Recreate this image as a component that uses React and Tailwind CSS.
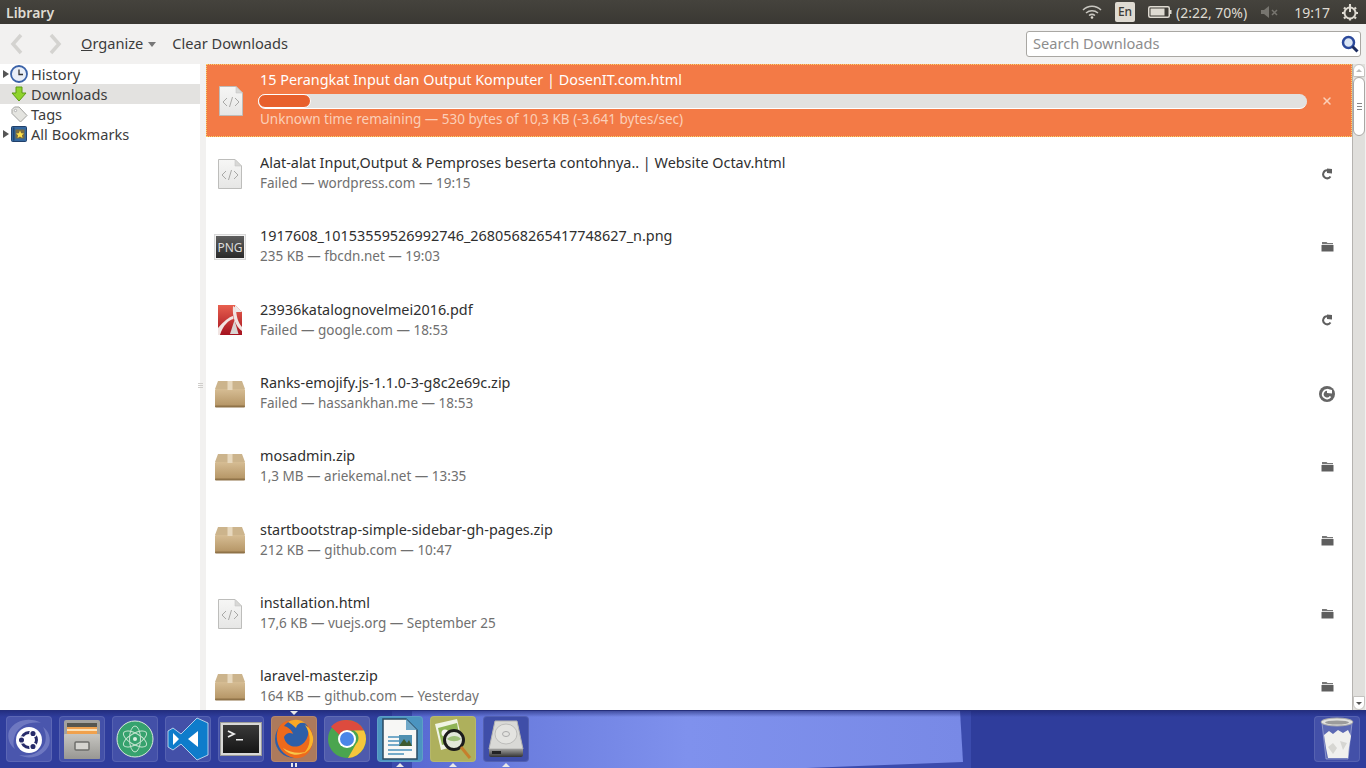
import { X } from "lucide-react";

const rows = [
  { name: "Alat-alat Input,Output & Pemproses beserta contohnya.. | Website Octav.html", info: "Failed — wordpress.com — 19:15", icon: "html", action: "retry" },
  { name: "1917608_10153559526992746_2680568265417748627_n.png", info: "235 KB — fbcdn.net — 19:03", icon: "png", action: "folder" },
  { name: "23936katalognovelmei2016.pdf", info: "Failed — google.com — 18:53", icon: "pdf", action: "retry" },
  { name: "Ranks-emojify.js-1.1.0-3-g8c2e69c.zip", info: "Failed — hassankhan.me — 18:53", icon: "zip", action: "retryHover" },
  { name: "mosadmin.zip", info: "1,3 MB — ariekemal.net — 13:35", icon: "zip", action: "folder" },
  { name: "startbootstrap-simple-sidebar-gh-pages.zip", info: "212 KB — github.com — 10:47", icon: "zip", action: "folder" },
  { name: "installation.html", info: "17,6 KB — vuejs.org — September 25", icon: "html", action: "folder" },
  { name: "laravel-master.zip", info: "164 KB — github.com — Yesterday", icon: "zip", action: "folder" },
];

function HtmlIcon() {
  return (
    <svg width="26" height="32" viewBox="0 0 26 32">
      <defs>
        <linearGradient id="htmlbg" x1="0" y1="0" x2="0" y2="1">
          <stop offset="0" stopColor="#f6f6f5" />
          <stop offset="1" stopColor="#e6e6e5" />
        </linearGradient>
      </defs>
      <path d="M1.5 1.5H18L24.5 8V30.5H1.5Z" fill="url(#htmlbg)" stroke="#bdbdbb" />
      <path d="M18 1.5V8H24.5Z" fill="#d8d8d6" stroke="#c8c8c6" strokeWidth="0.6" />
      <path d="M9 13L5 17L9 21M17 13L21 17L17 21M14.5 12L11.5 22" fill="none" stroke="#a9a9a7" strokeWidth="1" />
    </svg>
  );
}

function PngIcon() {
  return (
    <svg width="32" height="26" viewBox="0 0 32 26">
      <rect x="0.5" y="0.5" width="31" height="25" fill="#f2f2f2" stroke="#d8d8d8" />
      <defs>
        <linearGradient id="pngbg" x1="0" y1="0" x2="0" y2="1">
          <stop offset="0" stopColor="#5e5e5e" />
          <stop offset="1" stopColor="#2a2a2a" />
        </linearGradient>
      </defs>
      <rect x="2" y="2" width="28" height="22" fill="url(#pngbg)" />
      <text x="16" y="17.5" textAnchor="middle" fontSize="12" fill="#dcdcdc" fontFamily="'Noto Sans', sans-serif">PNG</text>
    </svg>
  );
}

function PdfIcon() {
  return (
    <svg width="26" height="32" viewBox="0 0 26 32">
      <defs>
        <linearGradient id="pdfbg" x1="0" y1="0" x2="0" y2="1">
          <stop offset="0" stopColor="#e8604f" />
          <stop offset="1" stopColor="#a5121f" />
        </linearGradient>
      </defs>
      <path d="M1 1H18L25 8V31H1Z" fill="url(#pdfbg)" />
      <path d="M18 1L25 8H18Z" fill="#ececec" />
      <path d="M16 2C15 12 18 22 25 27V23C21 19 19 11 19 4ZM1 24C7 17 12 13 16 12L16.5 15C12 16 6 21 3 31H1Z" fill="#f1e4e2" />
      <path d="M17.5 16L21.5 30H13Z" fill="#d9d4d2" />
    </svg>
  );
}

function ZipIcon() {
  return (
    <svg width="32" height="28" viewBox="0 0 32 28">
      <defs>
        <linearGradient id="boxfront" x1="0" y1="0" x2="0" y2="1">
          <stop offset="0" stopColor="#d6bd94" />
          <stop offset="1" stopColor="#b39363" />
        </linearGradient>
      </defs>
      <path d="M4 1H28L31 9H1Z" fill="#ccb48c" />
      <rect x="1" y="9" width="30" height="18" rx="1" fill="url(#boxfront)" />
      <rect x="1" y="25.5" width="30" height="2" rx="1" fill="#8f7349" />
      <rect x="13.5" y="1" width="5" height="9" fill="#e7d8bd" />
    </svg>
  );
}

function RetryIcon() {
  return (
    <svg width="12" height="12" viewBox="0 0 12 12">
      <path d="M9.5 8.5A4 4 0 1 1 7.2 2.4" fill="none" stroke="#5f5f5f" strokeWidth="2" />
      <path d="M6 0.5L11 1V5.5L6 5Z" fill="#5f5f5f" />
    </svg>
  );
}

function RetryHoverIcon() {
  return (
    <svg width="18" height="18" viewBox="0 0 18 18">
      <circle cx="9" cy="9" r="8" fill="#666" />
      <path d="M12.5 11.5A4.2 4.2 0 1 1 10.5 5.2" fill="none" stroke="#fff" strokeWidth="1.8" />
      <path d="M9 3.8L14 5V8.5L9 8Z" fill="#fff" />
    </svg>
  );
}

function FolderIcon() {
  return (
    <svg width="13" height="11" viewBox="0 0 13 11">
      <path d="M1 1H5.5L6.5 2H12V3.2H1Z" fill="#777" />
      <path d="M0.5 4H12.5V10.5H0.5Z" fill="#5e5e5e" />
    </svg>
  );
}

function FileIcon({ type }) {
  if (type === "png") return <PngIcon />;
  if (type === "pdf") return <PdfIcon />;
  if (type === "zip") return <ZipIcon />;
  return <HtmlIcon />;
}

function ActionIcon({ type }) {
  if (type === "retry") return <RetryIcon />;
  if (type === "retryHover") return <RetryHoverIcon />;
  return <FolderIcon />;
}

function ClockIcon() {
  return (
    <svg width="18" height="18" viewBox="0 0 18 18">
      <circle cx="9" cy="9" r="8" fill="#e9eef7" stroke="#3a62a8" strokeWidth="1.8" />
      <path d="M9 4.5V9.5H13" fill="none" stroke="#333" strokeWidth="1.3" />
    </svg>
  );
}

function DownIcon() {
  return (
    <svg width="16" height="16" viewBox="0 0 16 16">
      <path d="M5 1H11V7H15L8 15L1 7H5Z" fill="#8fd32c" stroke="#5c9a12" />
    </svg>
  );
}

function TagIcon() {
  return (
    <svg width="17" height="17" viewBox="0 0 17 17">
      <path d="M1 3.5L3.5 1H8L16 9.5L9.5 16L1 7.5Z" fill="#e4e4e0" stroke="#a3a3a0" />
      <circle cx="4.5" cy="4.5" r="1.2" fill="#fff" stroke="#999" strokeWidth="0.7" />
    </svg>
  );
}

function BookIcon() {
  return (
    <svg width="16" height="16" viewBox="0 0 16 16">
      <rect x="0.5" y="0.5" width="15" height="15" rx="1" fill="#35689f" stroke="#21406a" />
      <rect x="2" y="1.5" width="1.5" height="13" fill="#20446f" />
      <rect x="4.5" y="3.5" width="9" height="9" fill="#7b6d3e" />
      <path d="M9 4.5L10.2 7.2L13 7.5L10.9 9.3L11.5 12L9 10.6L6.5 12L7.1 9.3L5 7.5L7.8 7.2Z" fill="#ffe14b" />
    </svg>
  );
}

function SidebarItem({ label, icon, arrow, selected }) {
  return (
    <div className={`flex h-5 items-center ${selected ? "bg-[#e3e2e0]" : ""}`}>
      <span className="flex w-[9px] justify-end">
        {arrow && <span className="h-0 w-0 border-y-[4px] border-l-[6px] border-y-transparent border-l-[#555]" />}
      </span>
      <span className="flex w-5 justify-center">{icon}</span>
      <span className="ml-[2px] pt-[2px] text-[#3c3c3c]">{label}</span>
    </div>
  );
}

function Tile({ bg, children, mark, over }) {
  return (
    <div className={`relative flex h-[46px] w-[46px] shrink-0 items-center justify-center rounded-[4px] border border-white/10 ${bg}`}>
      {children}
      {over && <span className="absolute top-[-6px] h-0 w-0 border-x-[4px] border-t-[4px] border-x-transparent border-t-[#e8e8e8]" />}
      {mark === "double" && (
        <span className="absolute bottom-[-6px] flex gap-[2px]">
          <span className="h-[4px] w-[2px] bg-[#e8e8e8]" />
          <span className="h-[4px] w-[2px] bg-[#e8e8e8]" />
        </span>
      )}
      {mark === "bottom" && <span className="absolute bottom-[-6px] h-0 w-0 border-x-[4px] border-b-[4px] border-x-transparent border-b-[#e8e8e8]" />}
    </div>
  );
}

function UbuntuLogo() {
  return (
    <svg width="44" height="44" viewBox="0 0 44 44">
      <path d="M2 14C8 2 24 0 34 6C24 4 12 8 8 18C6 24 6 28 8 32C2 28 0 20 2 14Z" fill="#8790cf" fillOpacity="0.6" />
      <path d="M42 28C38 38 24 44 12 38C24 40 34 36 38 26C40 20 38 14 36 10C42 14 44 22 42 28Z" fill="#8790cf" fillOpacity="0.6" />
      <circle cx="22" cy="23" r="13" fill="#fff" />
      <circle cx="22" cy="23" r="7.5" fill="none" stroke="#272c6a" strokeWidth="3" />
      <circle cx="14.5" cy="23" r="3.2" fill="#272c6a" stroke="#fff" strokeWidth="1.3" />
      <circle cx="26" cy="16.5" r="3.2" fill="#272c6a" stroke="#fff" strokeWidth="1.3" />
      <circle cx="26" cy="29.5" r="3.2" fill="#272c6a" stroke="#fff" strokeWidth="1.3" />
    </svg>
  );
}

function FilesLogo() {
  return (
    <svg width="38" height="41" viewBox="0 0 38 41">
      <defs>
        <linearGradient id="drawer" x1="0" y1="0" x2="0" y2="1">
          <stop offset="0" stopColor="#c6c5c1" />
          <stop offset="1" stopColor="#989793" />
        </linearGradient>
      </defs>
      <rect x="1" y="1" width="36" height="39" rx="2" fill="#a3a29f" />
      <rect x="4" y="4" width="30" height="5" fill="#57564f" />
      <rect x="4" y="8" width="30" height="9" fill="#f0a14d" />
      <rect x="4" y="10" width="30" height="2" fill="#fae0b8" />
      <rect x="1" y="15" width="36" height="25" rx="1" fill="url(#drawer)" />
      <rect x="12" y="23" width="14" height="8" rx="1" fill="#d5d4d0" stroke="#6e6e6b" strokeWidth="1.5" />
    </svg>
  );
}

function AtomLogo() {
  return (
    <svg width="38" height="38" viewBox="0 0 38 38">
      <circle cx="19" cy="19" r="18" fill="#36a26e" stroke="#d9e9dd" strokeWidth="1" />
      <g fill="none" stroke="#c3e3cf" strokeWidth="1">
        <ellipse cx="19" cy="19" rx="13" ry="5.5" transform="rotate(30 19 19)" />
        <ellipse cx="19" cy="19" rx="13" ry="5.5" transform="rotate(-30 19 19)" />
        <ellipse cx="19" cy="19" rx="13" ry="5.5" transform="rotate(90 19 19)" />
      </g>
      <circle cx="19" cy="19" r="2" fill="#d9efe0" />
    </svg>
  );
}

function VsLogo() {
  return (
    <svg width="42" height="44" viewBox="0 0 42 44">
      <path d="M30 1L41 6V38L30 43L14 27L6 33L1 30V14L6 11L14 17Z" fill="#0e7ccb" stroke="#d7e8f5" strokeWidth="0.8" />
      <path d="M6 16L12 22L6 28ZM31 14V30L21 22Z" fill="#fff" />
    </svg>
  );
}

function TerminalLogo() {
  return (
    <svg width="42" height="34" viewBox="0 0 42 34">
      <defs>
        <linearGradient id="termbg" x1="0" y1="0" x2="0" y2="1">
          <stop offset="0" stopColor="#3a3a3a" />
          <stop offset="1" stopColor="#151515" />
        </linearGradient>
      </defs>
      <rect x="0.5" y="0.5" width="41" height="33" fill="#d8d8d6" stroke="#9d9d9a" />
      <rect x="3" y="3" width="36" height="28" fill="url(#termbg)" />
      <path d="M8 9L14 12L8 15" fill="none" stroke="#eee" strokeWidth="1.8" />
      <rect x="16" y="17" width="7" height="1.5" fill="#eee" />
    </svg>
  );
}

function FirefoxLogo() {
  return (
    <svg width="40" height="40" viewBox="0 0 40 40">
      <circle cx="20" cy="20" r="19" fill="#2e5fa8" />
      <path d="M4 10C0 22 6 36 20 39C32 41 40 30 39 18C38 12 36 8 33 5C36 13 34 22 27 26C20 30 11 26 10 18C12 14 16 13 19 15C18 11 14 8 10 7C12 4 16 2 19 1C11 1 6 5 4 10Z" fill="#ee6a1c" />
      <path d="M31 6C37 15 38 27 29 35C36 32 40 25 39 18C38 13 35 8 31 6Z" fill="#fbb52b" />
      <path d="M14 3C19 0 26 0 31 4C26 3 23 5 22 9C19 6 16 4 14 3Z" fill="#f9a825" />
      <path d="M9 29C14 36 24 38 31 33C24 35 15 33 9 29Z" fill="#f7c64a" />
    </svg>
  );
}

function ChromeLogo() {
  return (
    <svg width="40" height="40" viewBox="0 0 40 40">
      <circle cx="20" cy="20" r="19" fill="#4aa54f" />
      <path d="M20 1A19 19 0 0 1 37 11.5H20A8.5 8.5 0 0 0 12.5 16L4 7.8A19 19 0 0 1 20 1Z" fill="#dd4b3e" />
      <path d="M37 11.5A19 19 0 0 1 21 39L29 25A8.5 8.5 0 0 0 27 11.5Z" fill="#f5c63c" />
      <circle cx="20" cy="20" r="9" fill="#fff" />
      <circle cx="20" cy="20" r="7" fill="#4a86e8" />
    </svg>
  );
}

function WriterLogo() {
  return (
    <svg width="36" height="42" viewBox="0 0 36 42">
      <path d="M1 1H24L35 12V41H1Z" fill="#f7f7f5" stroke="#2a4a60" strokeWidth="1.5" />
      <path d="M24 1L35 12H24Z" fill="#6fa8c8" />
      <g fill="#74aac9">
        <rect x="6" y="18" width="24" height="2" />
        <rect x="6" y="22" width="12" height="2" />
        <rect x="6" y="26" width="12" height="2" />
        <rect x="6" y="31" width="24" height="2" />
        <rect x="6" y="35" width="16" height="2" />
      </g>
      <rect x="17" y="17" width="13" height="11" fill="#4e8fb0" />
      <path d="M17 28L22 21L25 25L27 22L30 28Z" fill="#3f5b30" />
    </svg>
  );
}

function ViewerLogo() {
  return (
    <svg width="40" height="42" viewBox="0 0 40 42">
      <path d="M2 6L24 1L30 26L8 32Z" fill="#f0f4e4" />
      <path d="M5 10L24 5L27 22L9 27Z" fill="#8fb455" />
      <circle cx="12" cy="15" r="3.5" fill="#f5f5f0" />
      <circle cx="21" cy="22" r="9.5" fill="#e2e7da" stroke="#1c1c1c" strokeWidth="3" />
      <path d="M14 21C18 17 25 17 28 21C24 24 18 24 14 21Z" fill="#9fc07a" />
      <path d="M28 29L37 40" stroke="#c67f2c" strokeWidth="3" />
    </svg>
  );
}

function DiskLogo() {
  return (
    <svg width="36" height="38" viewBox="0 0 36 38">
      <defs>
        <linearGradient id="diskbase" x1="0" y1="0" x2="0" y2="1">
          <stop offset="0" stopColor="#a0a09e" />
          <stop offset="1" stopColor="#333" />
        </linearGradient>
      </defs>
      <path d="M7 1H29L35 29H1Z" fill="#d9d9d6" stroke="#b3b3b1" />
      <ellipse cx="18" cy="14" rx="11" ry="10" fill="#e3e3e0" stroke="#bdbdbb" />
      <ellipse cx="18" cy="14" rx="3.5" ry="2.5" fill="none" stroke="#aaa" />
      <path d="M1 29H35V35C35 36 34 37 33 37H3C2 37 1 36 1 35Z" fill="url(#diskbase)" />
      <rect x="4" y="31" width="9" height="3" fill="#222" />
    </svg>
  );
}

function TrashLogo() {
  return (
    <svg width="36" height="44" viewBox="0 0 36 44">
      <path d="M3 6L7 42H29L33 6Z" fill="#8d97cc" fillOpacity="0.35" stroke="#c5cbe5" strokeWidth="0.5" />
      <ellipse cx="18" cy="5" rx="16" ry="4" fill="#e2e2df" stroke="#aaa" />
      <ellipse cx="18" cy="5.5" rx="12" ry="2" fill="#9b9b9b" />
      <path d="M5 18L10 14L14 17L19 13L24 16L29 13L32 19L30 30L29 41H9L7 31Z" fill="#f0f0ee" />
      <path d="M9 30L14 26L18 31L14 37ZM21 24L28 26L24 33Z" fill="#d6d6d2" />
    </svg>
  );
}

function Wallpaper() {
  return (
    <svg className="absolute inset-0" width="1366" height="58" viewBox="0 0 1366 58">
      <defs>
        <linearGradient id="wallLight" x1="412" y1="0" x2="963" y2="0" gradientUnits="userSpaceOnUse">
          <stop offset="0" stopColor="#5769d2" />
          <stop offset="0.2" stopColor="#6c7edf" />
          <stop offset="0.5" stopColor="#7f91ed" />
          <stop offset="1" stopColor="#7889e6" />
        </linearGradient>
        <linearGradient id="wallTop" x1="0" y1="0" x2="0" y2="1">
          <stop offset="0" stopColor="#1d2670" stopOpacity="0.6" />
          <stop offset="1" stopColor="#1d2670" stopOpacity="0" />
        </linearGradient>
      </defs>
      <rect width="1366" height="58" fill="#2f3d9c" />
      <rect x="392" width="579" height="58" fill="#3b4bad" />
      <path d="M412 0H960L963 51L780 58H412Z" fill="url(#wallLight)" />
      <rect width="1366" height="6" fill="url(#wallTop)" />
    </svg>
  );
}

export default function App() {
  return (
    <div className="flex h-screen w-full flex-col overflow-hidden bg-[#f2f1f0] font-['Noto_Sans',sans-serif] text-[14px]">
      {/* title bar */}
      <div className="flex h-6 shrink-0 items-center bg-[linear-gradient(#45433d,#3a3833)] pl-[6px] text-[#dfdbd2]">
        <span className="font-semibold">Library</span>
        <div className="ml-auto flex items-center">
          <svg width="20" height="14" viewBox="0 0 20 14" className="mr-[13px]">
            <g fill="none" stroke="#c9c7c1" strokeWidth="1.5">
              <path d="M1 5C6 0 14 0 19 5" />
              <path d="M4 8C7.5 5 12.5 5 16 8" />
              <path d="M7 10.5C9 9 11 9 13 10.5" />
            </g>
            <circle cx="10" cy="12.5" r="1.3" fill="#dfdbd2" />
          </svg>
          <span className="mr-[13px] flex h-5 w-5 items-center justify-center rounded-[2px] bg-[#dfdbd2] text-[12px] font-medium text-[#3c3b37]">En</span>
          <svg width="24" height="12" viewBox="0 0 24 12" className="mr-[4px]">
            <rect x="0.75" y="0.75" width="20.5" height="10.5" rx="1.5" fill="none" stroke="#dfdbd2" strokeWidth="1.5" />
            <rect x="2.5" y="2.5" width="14" height="7" fill="#dfdbd2" />
            <rect x="22" y="4" width="1.5" height="4" fill="#dfdbd2" />
          </svg>
          <span className="mr-[14px]">(2:22, 70%)</span>
          <svg width="18" height="12" viewBox="0 0 18 12" className="mr-[15px]">
            <path d="M0 4H3L8 0V12L3 8H0Z" fill="#77756f" />
            <path d="M11 4L16 9M16 4L11 9" stroke="#77756f" strokeWidth="1.5" />
          </svg>
          <span className="mr-[11px]">19:17</span>
          <svg width="18" height="18" viewBox="0 0 18 18" className="mr-[7px]">
            <circle cx="9" cy="10" r="5.5" fill="none" stroke="#dfdbd2" strokeWidth="2" />
            <path d="M9 1V9" stroke="#dfdbd2" strokeWidth="2" />
            <path d="M9 2.5V4M9 15V17.5M1 10H3M15 10H17M3 4.5L4.5 6M15 4.5L13.5 6M3 15.5L4.5 14M15 15.5L13.5 14" stroke="#dfdbd2" strokeWidth="2.2" />
          </svg>
        </div>
      </div>

      {/* toolbar */}
      <div className="flex h-10 shrink-0 items-center text-[14.6px] text-[#3c3c3c]">
        <svg width="14" height="22" viewBox="0 0 14 22" className="ml-[10px]">
          <path d="M11 2L3 11L11 20" fill="none" stroke="#d4d3d0" strokeWidth="3.5" />
        </svg>
        <svg width="14" height="22" viewBox="0 0 14 22" className="ml-[24px]">
          <path d="M3 2L11 11L3 20" fill="none" stroke="#d4d3d0" strokeWidth="3.5" />
        </svg>
        <span className="ml-[19px]"><span className="underline">O</span>rganize</span>
        <span className="ml-[5px] h-0 w-0 border-x-[4px] border-t-[5px] border-x-transparent border-t-[#777]" />
        <span className="ml-[16px]">Clear Downloads</span>
        <div className="ml-auto mr-[5px] flex h-[26px] w-[335px] items-center rounded-[3px] border border-[#a9a7a3] bg-white pl-[6px] pr-[1px] text-[#8d8d8d]">
          <span>Search Downloads</span>
          <svg width="18" height="18" viewBox="0 0 18 18" className="ml-auto">
            <circle cx="7.5" cy="7.5" r="5.5" fill="#dbe6f5" stroke="#2c4a9c" strokeWidth="2.5" />
            <path d="M11.5 11.5L16.5 16.5" stroke="#1c2c60" strokeWidth="3" />
          </svg>
        </div>
      </div>

      {/* panels */}
      <div className="flex min-h-0 flex-1">
        <div className="w-[200px] shrink-0 bg-white text-[14.6px]">
          <SidebarItem label="History" icon={<ClockIcon />} arrow />
          <SidebarItem label="Downloads" icon={<DownIcon />} selected />
          <SidebarItem label="Tags" icon={<TagIcon />} />
          <SidebarItem label="All Bookmarks" icon={<BookIcon />} arrow />
        </div>
        <div className="flex w-[6px] shrink-0 flex-col items-center justify-center gap-[1px] pr-[5px] pb-[4px]">
          <span className="h-px w-[5px] bg-[#cfcdca]" />
          <span className="h-px w-[5px] bg-[#cfcdca]" />
          <span className="h-px w-[5px] bg-[#cfcdca]" />
        </div>

        {/* downloads list */}
        <div className="min-w-0 flex-1 overflow-hidden bg-white">
          <div className="flex h-[73px] items-center border border-dotted border-[#f7d36a] bg-[#f37a46] text-white">
            <span className="ml-[8px] flex w-[32px] justify-center"><HtmlIcon /></span>
            <div className="ml-[13px] min-w-0 flex-1 pb-[1px]">
              <div className="truncate text-[14.4px] leading-[20px]">15 Perangkat Input dan Output Komputer | DosenIT.com.html</div>
              <div className="ml-[-2px] mt-[4px] h-[15px] rounded-full border-b border-white bg-[#e2e1df]">
                <div className="h-[14px] w-[53px] rounded-full border border-white bg-[#e8602c]" />
              </div>
              <div className="truncate text-[13.5px] leading-[21px] text-[#fbcfb8]">Unknown time remaining — 530 bytes of 10,3 KB (-3.641 bytes/sec)</div>
            </div>
            <X size={12} strokeWidth={3} className="ml-[14px] mr-[18px] text-[#fbcfb8]" />
          </div>

          {rows.map((r) => (
            <div key={r.name} className="flex h-[73.33px] items-center">
              <span className="ml-[8px] flex w-[32px] justify-center"><FileIcon type={r.icon} /></span>
              <div className="ml-[14px] min-w-0 flex-1">
                <div className="truncate text-[14.4px] leading-[20px] text-[#2f2f2f]">{r.name}</div>
                <div className="truncate text-[13.5px] leading-[21px] text-[#707070]">{r.info}</div>
              </div>
              <span className="mr-[15px] flex w-[20px] justify-center"><ActionIcon type={r.action} /></span>
            </div>
          ))}
        </div>

        {/* scrollbar */}
        <div className="mr-px flex w-[13px] shrink-0 flex-col border-l border-[#b5b3b0] bg-[#e0dfdc]">
          <div className="flex h-[13px] items-center justify-center rounded-t-full border border-[#c4c2bf] bg-white">
            <span className="h-0 w-0 border-x-[3px] border-b-[3px] border-x-transparent border-b-[#bbb]" />
          </div>
          <div className="flex h-[59px] flex-col items-center justify-center gap-[2px] rounded-full border border-[#a9a7a4] bg-white">
            <span className="h-px w-[5px] bg-[#888]" />
            <span className="h-px w-[5px] bg-[#888]" />
            <span className="h-px w-[5px] bg-[#888]" />
          </div>
          <div className="mt-auto flex h-[14px] items-center justify-center rounded-b-full border border-[#c4c2bf] bg-white">
            <span className="h-0 w-0 border-x-[3px] border-t-[3px] border-x-transparent border-t-[#555]" />
          </div>
        </div>
      </div>

      {/* launcher */}
      <div className="relative h-[58px] shrink-0 border-t border-[#252f7c]">
        <Wallpaper />
        <div className="relative flex gap-[7px] pl-[6px] pt-[5px]">
          <Tile bg="bg-[#4a56ad]"><UbuntuLogo /></Tile>
          <Tile bg="bg-[#4350a8]"><FilesLogo /></Tile>
          <Tile bg="bg-[#4350a8]"><AtomLogo /></Tile>
          <Tile bg="bg-[#4350a8]"><VsLogo /></Tile>
          <Tile bg="bg-[#4350a8]"><TerminalLogo /></Tile>
          <Tile bg="bg-[#ad7a5c]" mark="double" over><FirefoxLogo /></Tile>
          <Tile bg="bg-[#4e5aac]"><ChromeLogo /></Tile>
          <Tile bg="bg-[#4b94c0]" mark="bottom"><WriterLogo /></Tile>
          <Tile bg="bg-[#aeb05c]" mark="bottom"><ViewerLogo /></Tile>
          <Tile bg="bg-[#3f4ea8]" mark="bottom"><DiskLogo /></Tile>
          <div className="ml-auto mr-[6px]">
            <Tile bg="bg-[#4350a8]"><TrashLogo /></Tile>
          </div>
        </div>
      </div>
    </div>
  );
}
